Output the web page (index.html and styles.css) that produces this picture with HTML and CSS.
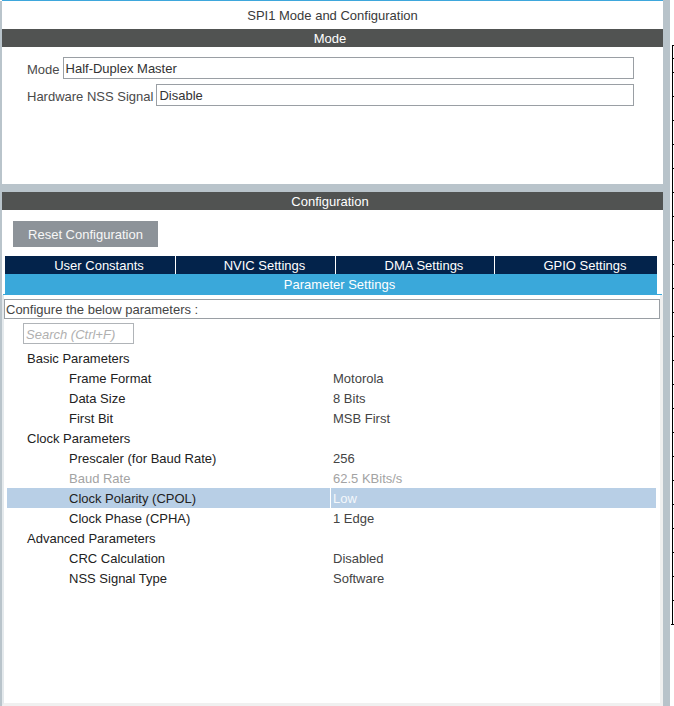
FILE: index.html
```html
<!DOCTYPE html>
<html>
<head>
<meta charset="utf-8">
<title>SPI1 Mode and Configuration</title>
<link rel="stylesheet" href="styles.css">
</head>
<body>
<div class="frame">
  <div class="lside"></div>
  <div class="panel">
    <div class="title">SPI1 Mode and Configuration</div>
    <div class="bar">Mode</div>
    <div class="mode-body">
      <div class="field"><span class="lbl">Mode</span><div class="input">Half-Duplex Master</div></div>
      <div class="field"><span class="lbl">Hardware NSS Signal</span><div class="input">Disable</div></div>
    </div>
    <div class="sep"></div>
    <div class="bar">Configuration</div>
    <div class="config-body">
      <div class="reset">Reset Configuration</div>
      <div class="tabs">
        <div class="tab t1">User Constants</div>
        <div class="tab t2">NVIC Settings</div>
        <div class="tab t3">DMA Settings</div>
        <div class="tab t4">GPIO Settings</div>
      </div>
      <div class="active-tab">Parameter Settings</div>
      <div class="tab-line"></div>
      <div class="tab-content">
        <div class="configure">Configure the below parameters :</div>
        <div class="search">Search (Ctrl+F)</div>
        <div class="tree">
          <div class="trow group"><div class="k">Basic Parameters</div><div class="v"></div></div>
          <div class="trow"><div class="k">Frame Format</div><div class="v">Motorola</div></div>
          <div class="trow"><div class="k">Data Size</div><div class="v">8 Bits</div></div>
          <div class="trow"><div class="k">First Bit</div><div class="v">MSB First</div></div>
          <div class="trow group"><div class="k">Clock Parameters</div><div class="v"></div></div>
          <div class="trow"><div class="k">Prescaler (for Baud Rate)</div><div class="v">256</div></div>
          <div class="trow disabled"><div class="k">Baud Rate</div><div class="v">62.5 KBits/s</div></div>
          <div class="trow selected"><div class="k">Clock Polarity (CPOL)</div><div class="v">Low</div></div>
          <div class="trow"><div class="k">Clock Phase (CPHA)</div><div class="v">1 Edge</div></div>
          <div class="trow group"><div class="k">Advanced Parameters</div><div class="v"></div></div>
          <div class="trow"><div class="k">CRC Calculation</div><div class="v">Disabled</div></div>
          <div class="trow"><div class="k">NSS Signal Type</div><div class="v">Software</div></div>
        </div>
      </div>
    </div>
  </div>
  <div class="scroll"></div>
  <div class="edge">
    <div class="cell c1"></div>
    <div class="cell c2"></div>
    <div class="cell"></div>
    <div class="cell"></div>
    <div class="cell"></div>
    <div class="cell"></div>
    <div class="cell"></div>
    <div class="cell"></div>
    <div class="cell"></div>
    <div class="cell"></div>
    <div class="cell"></div>
    <div class="cell"></div>
    <div class="cell"></div>
    <div class="cell"></div>
    <div class="cell"></div>
    <div class="cell"></div>
    <div class="cell"></div>
    <div class="cell"></div>
    <div class="cell"></div>
    <div class="cell"></div>
    <div class="cell"></div>
    <div class="cell"></div>
    <div class="cell"></div>
    <div class="cell"></div>
    <div class="cell"></div>
    <div class="cell last"></div>
  </div>
</div>
</body>
</html>
```

FILE: styles.css
```css
* { box-sizing: border-box; }
html, body {
  margin: 0;
  padding: 0;
  width: 674px;
  height: 706px;
  overflow: hidden;
  background: #ffffff;
  font-family: "Liberation Sans", Arial, sans-serif;
  font-size: 13px;
}
.frame {
  display: flex;
  height: 706px;
}
.lside {
  width: 2px;
  margin-top: 1px;
  background: #b9c4cb;
  flex: none;
}
.panel {
  width: 661px;
  flex: none;
  display: flex;
  flex-direction: column;
  border-top: 1px solid #3ea7dc;
}
.title {
  height: 28px;
  padding-top: 1px;
  line-height: 28px;
  text-align: center;
  color: #3a3a3a;
}
.bar {
  height: 18px;
  padding: 1px 5px 0 0;
  line-height: 18px;
  background: #515352;
  color: #ffffff;
  text-align: center;
}
.mode-body {
  height: 137px;
  padding: 10px 29px 0 25px;
  display: flex;
  flex-direction: column;
  gap: 5px;
}
.field {
  display: flex;
  align-items: center;
  gap: 3px;
  padding-top: 1px;
}
.field .input { margin-top: -1px; }
.lbl {
  color: #4a4a4a;
  white-space: nowrap;
  padding-top: 1px;
}
.input {
  flex: 1;
  height: 22px;
  padding: 1px 0 0 2px;
  line-height: 20px;
  border: 1px solid #9a9fa4;
  color: #333333;
}
.sep {
  height: 8px;
  background: #b9c4cb;
}
.config-body {
  flex: 1;
  display: flex;
  flex-direction: column;
  align-items: flex-start;
}
.reset {
  margin: 11px 0 0 11px;
  width: 145px;
  height: 26px;
  padding-top: 1px;
  line-height: 26px;
  text-align: center;
  background: #8d9399;
  color: #f7f7f7;
}
.tabs {
  margin: 9px 0 0 3px;
  display: grid;
  grid-template-columns: 170px 160px 159px 163px;
  height: 18px;
  background: #03234b;
}
.tab {
  color: #ffffff;
  height: 18px;
  padding-top: 1px;
  line-height: 18px;
  text-align: center;
  padding-left: 18px;
  border-left: 1px solid #ffffff;
  white-space: nowrap;
}
.tab.t1 { border-left: none; }
.active-tab {
  margin-left: 3px;
  width: 652px;
  height: 20px;
  padding: 1px 0 0 17px;
  line-height: 20px;
  background: #3aa8da;
  color: #ffffff;
  text-align: center;
}
.tab-line {
  margin-left: 1px;
  width: 659px;
  height: 1px;
  background: #3aa8da;
}
.tab-content {
  flex: 1;
  width: 661px;
  border-left: 2px solid #e4e9ec;
  border-right: 3px solid #f0f0f0;
  border-bottom: 3px solid #f0f0f0;
  display: flex;
  flex-direction: column;
  align-items: flex-start;
}
.configure {
  margin-top: 4px;
  width: 656px;
  height: 20px;
  padding: 1px 0 0 1px;
  line-height: 18px;
  border: 1px solid #9a9fa4;
  color: #444444;
}
.search {
  margin: 4px 0 0 19px;
  width: 111px;
  height: 21px;
  padding: 1px 0 0 2px;
  line-height: 19px;
  border: 1px solid #b0b4b8;
  color: #b0b0b0;
  font-style: italic;
  white-space: nowrap;
  overflow: hidden;
}
.tree {
  margin: 4px 0 0 3px;
  width: 649px;
}
.trow {
  display: grid;
  grid-template-columns: 323px 1fr;
  height: 20px;
  color: #222222;
}
.trow .k,
.trow .v {
  height: 20px;
  padding-top: 1px;
  line-height: 20px;
  white-space: nowrap;
}
.trow .k { padding-left: 62px; }
.trow.group .k { padding-left: 20px; }
.trow .v {
  border-left: 1px solid transparent;
  padding-left: 2px;
  color: #444444;
}
.trow.disabled .k,
.trow.disabled .v { color: #a3a3a3; }
.trow.selected { background: #b8cfe6; }
.trow.selected .v {
  border-left-color: #ffffff;
  color: #f4f7fb;
}
.scroll {
  width: 7px;
  background: #b8c3ca;
  flex: none;
}
.edge {
  width: 4px;
  flex: none;
  padding-top: 45px;
}
.cell {
  height: 24px;
  margin-left: 2px;
  border-left: 1px solid #000000;
  border-top: 1px solid #000000;
}
.cell.c1 { height: 13px; }
.cell.c2 { height: 14px; }
.cell.last {
  height: 1px;
  border-left: none;
  margin-left: 1px;
}
```
